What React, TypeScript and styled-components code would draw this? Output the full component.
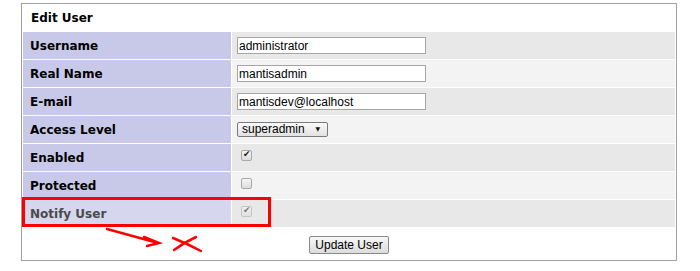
import React from 'react';
import styled, { createGlobalStyle } from 'styled-components';

const GlobalStyle = createGlobalStyle`
    html, body {
        margin: 0;
        background: #ffffff;
    }
    body {
        font-family: "DejaVu Sans", Verdana, sans-serif;
    }
`;

const Page = styled.div`
    position: relative;
    width: 700px;
    height: 271px;
    padding: 3px 0 0 21px;
    box-sizing: border-box;
`;

const Form = styled.form`
    margin: 0;
`;

const Table = styled.table`
    width: 656px;
    box-sizing: border-box;
    border: 1px solid #a0a0a0;
    border-collapse: separate;
    border-spacing: 1px;
`;

const Title = styled.td`
    height: 26px;
    box-sizing: border-box;
    padding: 0 8px;
    font-size: 12px;
    font-weight: bold;
    color: #000;
    background: #ffffff;
`;

const Label = styled.td<{ $disabled?: boolean }>`
    width: 208px;
    height: 27px;
    box-sizing: border-box;
    padding: 0 0 0 7px;
    font-size: 12px;
    font-weight: bold;
    color: ${(p) => (p.$disabled ? '#4a4a4a' : '#000')};
    background: ${(p) => (p.$disabled ? '#d6d6ee' : '#c8c8e8')};
`;

const Value = styled.td<{ $alt?: boolean }>`
    height: 27px;
    box-sizing: border-box;
    padding: 0 5px;
    background: ${(p) => (p.$alt ? '#f3f3f3' : '#e8e8e8')};
    font-family: "Liberation Sans", Arial, sans-serif;
    font-size: 12px;
`;

const TextInput = styled.input`
    width: 189px;
    height: 17px;
    box-sizing: border-box;
    margin: 0;
    padding: 0 1px;
    border: 1px solid #a5a5a5;
    background: #fff;
    font-family: "Liberation Sans", Arial, sans-serif;
    font-size: 12px;
    color: #000;
    vertical-align: middle;
    outline: none;
`;

const SelectWrap = styled.span`
    position: relative;
    display: inline-block;
    vertical-align: middle;
    &::after {
        content: '▼';
        position: absolute;
        right: 8px;
        top: 3px;
        font-family: "DejaVu Sans", sans-serif;
        font-size: 6px;
        color: #111;
        pointer-events: none;
    }
`;

const Select = styled.select`
    appearance: none;
    width: 91px;
    height: 15px;
    box-sizing: border-box;
    margin: 0;
    padding: 0 0 0 4px;
    border: 1px solid #7a7a7a;
    border-radius: 2px;
    background: linear-gradient(#fafafa, #e2e2e2);
    font-family: "Liberation Sans", Arial, sans-serif;
    font-size: 12px;
    line-height: 13px;
    color: #000;
    outline: none;
`;

const Check = styled.input`
    appearance: none;
    position: relative;
    width: 11px;
    height: 11px;
    box-sizing: border-box;
    margin: 0 0 0 4px;
    border: 1px solid #a8a8a8;
    border-radius: 2px;
    background: linear-gradient(#f6f6f6, #dcdcdc);
    vertical-align: 2px;
    &:checked::after {
        content: '✔';
        position: absolute;
        left: 1px;
        top: -2px;
        font-family: "DejaVu Sans", sans-serif;
        font-size: 9px;
        font-weight: bold;
        color: #1a1a1a;
    }
    &:disabled {
        opacity: 0.55;
    }
`;

const ButtonCell = styled.td`
    height: 29px;
    text-align: center;
    background: #ffffff;
`;

const Button = styled.button`
    height: 18px;
    margin: 0;
    padding: 0 5px;
    border: 1px solid #8a8a8a;
    border-radius: 2px;
    background: linear-gradient(#f8f8f8, #dcdcdc);
    font-family: "Liberation Sans", Arial, sans-serif;
    font-size: 12px;
    line-height: 14px;
    color: #000;
    cursor: pointer;
`;

const Markup = styled.svg`
    position: absolute;
    top: 0;
    left: 0;
    pointer-events: none;
`;

const textRows = [
    { label: 'Username', value: 'administrator' },
    { label: 'Real Name', value: 'mantisadmin' },
    { label: 'E-mail', value: 'mantisdev@localhost' },
];

const App = () => {
    return (
        <Page>
            <GlobalStyle />
            <Form onSubmit={(e) => e.preventDefault()}>
                <Table>
                    <tbody>
                        <tr>
                            <Title colSpan={2}>Edit User</Title>
                        </tr>
                        {textRows.map((r, i) => (
                            <tr key={r.label}>
                                <Label>{r.label}</Label>
                                <Value $alt={i % 2 === 1}>
                                    <TextInput defaultValue={r.value} />
                                </Value>
                            </tr>
                        ))}
                        <tr>
                            <Label>Access Level</Label>
                            <Value $alt>
                                <SelectWrap>
                                    <Select defaultValue="superadmin">
                                        <option value="superadmin">superadmin</option>
                                        <option value="administrator">administrator</option>
                                        <option value="manager">manager</option>
                                    </Select>
                                </SelectWrap>
                            </Value>
                        </tr>
                        <tr>
                            <Label>Enabled</Label>
                            <Value>
                                <Check type="checkbox" defaultChecked />
                            </Value>
                        </tr>
                        <tr>
                            <Label>Protected</Label>
                            <Value $alt>
                                <Check type="checkbox" />
                            </Value>
                        </tr>
                        <tr>
                            <Label $disabled>Notify User</Label>
                            <Value>
                                <Check type="checkbox" defaultChecked disabled />
                            </Value>
                        </tr>
                        <tr>
                            <ButtonCell colSpan={2}>
                                <Button type="submit">Update User</Button>
                            </ButtonCell>
                        </tr>
                    </tbody>
                </Table>
            </Form>
            <Markup width="700" height="271" viewBox="0 0 700 271">
                <rect x="23.5" y="198.5" width="246" height="27" fill="none" stroke="#ff0000" strokeWidth="3" />
                <g stroke="#ff0000" strokeWidth="2.5" strokeLinecap="round" fill="none">
                    <path d="M107 229 L158 243" />
                    <path d="M144 237 L159 243 L147 246" />
                    <path d="M173 238 Q188 244 201 251" />
                    <path d="M174 250 Q185 242 196 237" />
                </g>
            </Markup>
        </Page>
    );
};

export default App;
